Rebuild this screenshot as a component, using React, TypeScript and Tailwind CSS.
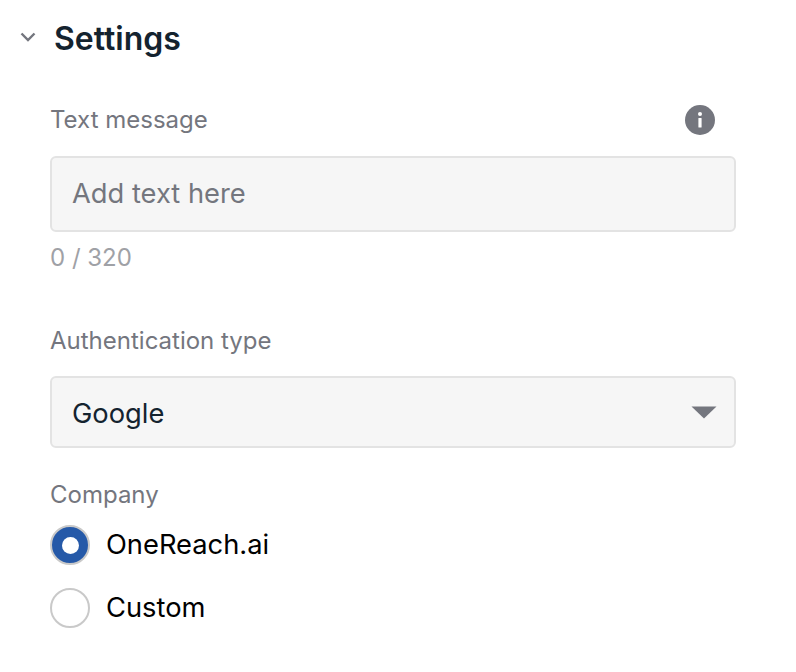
function InfoIcon() {
  return (
    <svg width="30" height="30" viewBox="0 0 30 30" aria-hidden="true">
      <circle cx="15" cy="15" r="15" fill="#74767e" />
      <circle cx="15" cy="9" r="2" fill="#fff" />
      <rect x="13.4" y="13" width="3.2" height="9.5" rx="0.6" fill="#fff" />
    </svg>
  );
}

function Radio({ label, checked }: { label: string; checked?: boolean }) {
  return (
    <div className="flex items-center gap-4 h-10">
      {checked ? (
        <span className="w-10 h-10 rounded-full bg-[#2559a8] border-2 border-[#c9c9c9] flex items-center justify-center">
          <span className="w-[17px] h-[17px] rounded-full bg-white" />
        </span>
      ) : (
        <span className="w-10 h-10 rounded-full bg-white border-2 border-[#c9c9c9]" />
      )}
      <span className="text-[27.3px] leading-10 text-black">{label}</span>
    </div>
  );
}

export default function App() {
  return (
    <div className="w-[796px] h-[672px] bg-white font-['Inter',sans-serif] pt-[17px]">
      {/* header */}
      <div className="flex items-center h-[44px] pl-[20px]">
        <svg width="16" height="10" viewBox="0 0 16 10" fill="none" stroke="#74767e" strokeWidth="2.4" className="mr-[18px] -mt-[5px]">
          <path d="M1.5 1.5 8 8l6.5-6.5" />
        </svg>
        <h1 className="text-[32px] font-semibold text-[#14232f]">Settings</h1>
      </div>

      <div className="pl-[50px] w-[736px]">
        <div className="flex items-center justify-between h-[30px] mt-[44px] pr-[21px]">
          <span className="text-[24px] text-[#74767e]">Text message</span>
          <InfoIcon />
        </div>
        <div className="mt-[21px] h-[76px] bg-[#f6f6f6] border-2 border-[#e3e3e3] rounded-[6px] flex items-center px-[20px]">
          <span className="text-[27.3px] text-[#74767e]">Add text here</span>
        </div>
        <div className="mt-[11px] text-[24px] leading-[30px] text-[#9fa1a6]">0 / 320</div>

        <div className="mt-[53px] text-[24px] leading-[30px] text-[#74767e]">Authentication type</div>
        <div className="mt-[20px] h-[72px] bg-[#f6f6f6] border-2 border-[#e3e3e3] rounded-[6px] flex items-center justify-between pl-[20px] pr-[17px]">
          <span className="text-[27.3px] text-[#14232f] pt-[4px]">Google</span>
          <svg width="26" height="13" viewBox="0 0 26 13" aria-hidden="true">
            <path d="M0.5 0.5h25L13 12.5z" fill="#74767e" />
          </svg>
        </div>

        <div className="mt-[32px] text-[24px] leading-[30px] text-[#74767e]">Company</div>
        <div className="mt-[15px] flex flex-col gap-[23px]">
          <Radio label="OneReach.ai" checked />
          <Radio label="Custom" />
        </div>
      </div>
    </div>
  );
}
